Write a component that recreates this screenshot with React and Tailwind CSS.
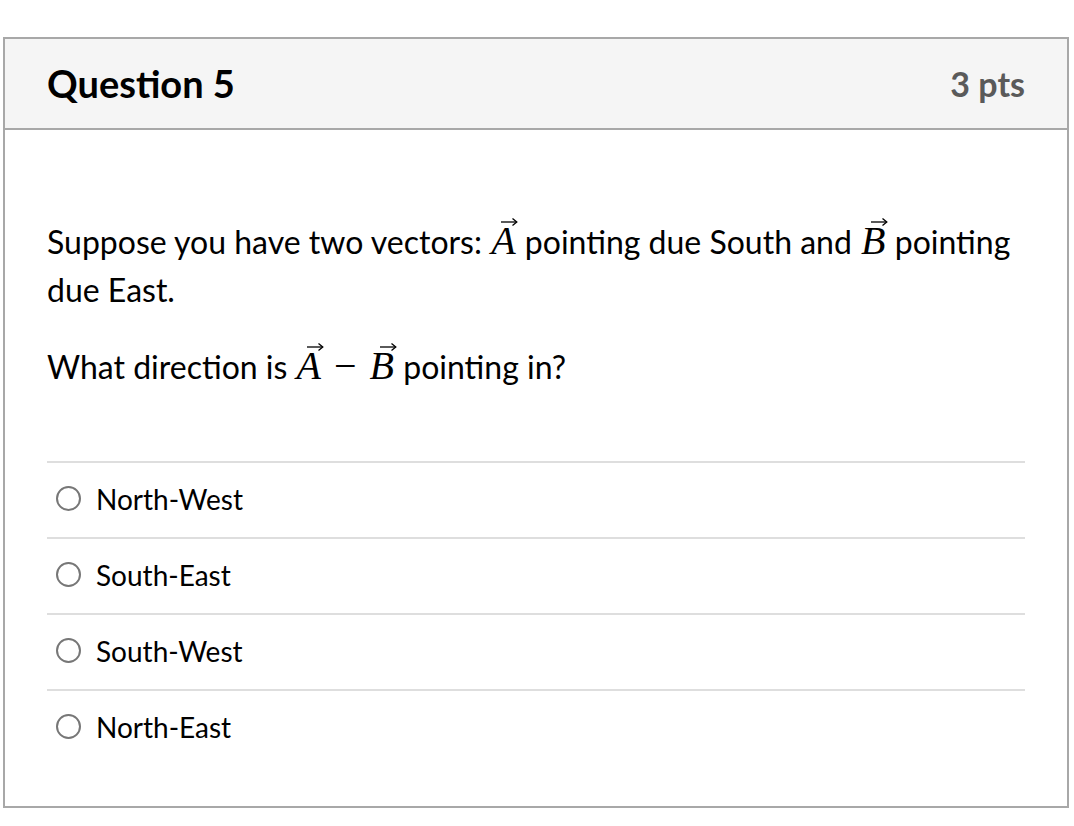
import React from 'react';

const Vec = ({ letter }) => (
  <span className="relative inline-block px-[1px] font-['Liberation_Serif',serif] text-[40px] italic leading-none">
    {letter}
    <svg
      className="absolute left-[10px] top-[-4px]"
      width="18"
      height="10"
      viewBox="0 0 18 10"
      fill="none"
      stroke="#000"
      strokeWidth="1.3"
    >
      <line x1="1" y1="5" x2="16.5" y2="5" />
      <path d="M12.5 1.5 L16.8 5 L12.5 8.5" />
    </svg>
  </span>
);

const options = ['North-West', 'South-East', 'South-West', 'North-East'];

export default function App() {
  return (
    <div className="min-h-[826px] bg-white pl-[3px] pr-[5px] pt-[37px] font-['Lato',sans-serif] text-black">
      <div className="border-2 border-[#a8a8a8]">
        <div className="flex h-[91px] items-center justify-between border-b-2 border-[#a8a8a8] bg-[#f5f5f5] px-[42px]">
          <h2 className="text-[38px] font-bold">Question 5</h2>
          <div className="text-[34px] font-bold text-[#5a5a5a]">3 pts</div>
        </div>
        <div className="px-[42px] pb-[41px] pt-[88px]">
          <p className="text-[32px] leading-[48px]">
            Suppose you have two vectors: <Vec letter="A" /> pointing due South and <Vec letter="B" /> pointing
            due East.
          </p>
          <p className="mt-[28px] text-[32px] leading-[48px]">
            What direction is <Vec letter="A" />
            <span className="mx-[12px] font-['Liberation_Serif',serif] text-[40px]">−</span>
            <Vec letter="B" /> pointing in?
          </p>
          <div className="mt-[70px]">
            {options.map((opt) => (
              <label
                key={opt}
                className="flex h-[76px] items-center gap-[15px] border-t-2 border-[#dedede] pb-[3px] pl-[9px]"
              >
                <span className="h-[25px] w-[25px] rounded-full border-2 border-[#777] bg-white" />
                <span className="text-[28px]">{opt}</span>
              </label>
            ))}
          </div>
        </div>
      </div>
    </div>
  );
}
